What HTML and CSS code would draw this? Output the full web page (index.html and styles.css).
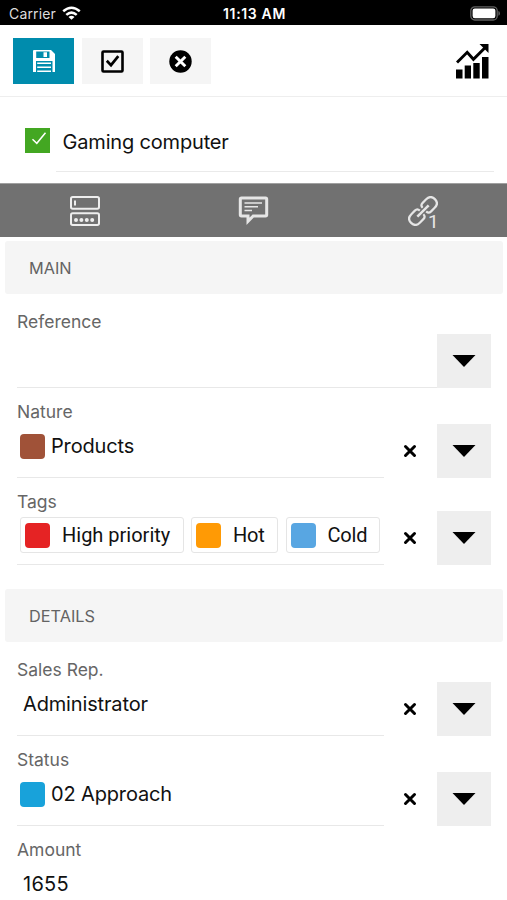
FILE: index.html
```html
<!DOCTYPE html>
<html lang="en">
<head>
<meta charset="utf-8">
<meta name="viewport" content="width=device-width, initial-scale=1">
<title>Gaming computer</title>
<link rel="stylesheet" href="styles.css">
</head>
<body>
<svg class="defs" width="0" height="0">
  <symbol id="arrow" viewBox="0 0 24 12"><path d="M0.5 0H23.5L12 12Z"/></symbol>
  <symbol id="clear" viewBox="0 0 14 14"><path d="M2.5 2.5L11.5 11.5M11.5 2.5L2.5 11.5" stroke="#000" stroke-width="3" stroke-linecap="round"/></symbol>
</svg>
<div class="status">
  <div class="carrier"><span class="carrier-name">Carrier</span>
    <svg width="19" height="15" viewBox="0 0 19 15" fill="none" stroke="#fff" stroke-width="2.5"><path d="M1.2 5.3Q9.5 -1.7 17.8 5.3M4.3 8.9Q9.5 4.3 14.7 8.9"/><path d="M9.5 13.8L6.5 10.9Q9.5 8.5 12.5 10.9Z" fill="#fff" stroke="none"/></svg>
  </div>
  <span class="clock">11:13 AM</span>
  <svg class="battery" width="31" height="15" viewBox="0 0 31 15"><rect x=".8" y=".8" width="26.4" height="13.2" rx="4" fill="none" stroke="#606060" stroke-width="1.3"/><rect x="2.6" y="2.6" width="22.8" height="9.6" rx="2.2" fill="#fff"/><path d="M28.4 5Q30 5.5 30 7.4T28.4 9.8Z" fill="#606060"/></svg>
</div>
<header class="toolbar">
  <button class="tool primary" aria-label="Save"><svg width="22" height="23" viewBox="0 0 22 23"><path fill="#fff" fill-rule="evenodd" d="M1 0H18L22 4V22H19.5V11H3V22H0V1Q0 0 1 0ZM3.2 1.4V8H16.5V1.4ZM10.5 2.2H14V7H10.5Z"/><path fill="none" stroke="#fff" stroke-width="1.4" d="M4.2 13.2H18M4.2 17.2H18M4.2 21.2H18"/></svg></button>
  <button class="tool" aria-label="Save and close"><svg width="23" height="23" viewBox="0 0 23 23" fill="none" stroke="#000"><rect x="1.5" y="1.5" width="20" height="20" rx="1" stroke-width="2.6"/><path d="M5.8 10.8L10 15.2L17.3 6.2" stroke-width="2.7"/></svg></button>
  <button class="tool" aria-label="Cancel"><svg width="23" height="23" viewBox="0 0 23 23"><circle cx="11.5" cy="11.5" r="11.2"/><path d="M6.7 6.7L16.3 16.3M16.3 6.7L6.7 16.3" stroke="#fff" stroke-width="2.9"/></svg></button>
  <svg class="chart" width="33" height="35" viewBox="0 0 33 35"><path d="M0 25.5H6.5V34.5H0ZM8.7 21.5H15V34.5H8.7ZM17.3 19H23.7V34.5H17.3ZM26 13H32.5V34.5H26Z"/><path d="M1 18.5L11.2 8.3L17.4 15.3L29 3.7" fill="none" stroke="#000" stroke-width="2.9"/><path d="M23.5 0H32.5V9Z"/></svg>
</header>
<div class="record">
  <span class="done"><svg width="25" height="25" viewBox="0 0 25 25" fill="none" stroke="#fff" stroke-width="1.5"><path d="M7.5 11.3L11.8 15.3L20.5 4.7"/></svg></span>
  <div class="record-name"><span class="name-text">Gaming computer</span></div>
</div>
<nav class="tabs">
  <a><svg width="30" height="30" viewBox="0 0 30 30" fill="none" stroke="#eee" stroke-width="2"><rect x="1" y="1" width="28" height="11.8" rx="1.7"/><path d="M5 4.5V9.5"/><rect x="1" y="17.2" width="28" height="11.8" rx="1.7"/><path d="M6 23.9H25" stroke-width="4" stroke-linecap="round" stroke-dasharray="0 5.4"/></svg></a>
  <a><svg width="31" height="29" viewBox="0 0 31 29" fill="none" stroke="#e6e6e6"><path d="M3.5 2H27.5Q28.7 2 28.7 3.2V18.8Q28.7 20 27.5 20H15.2L10 25.3V20H3.5Q2.3 20 2.3 18.8V3.2Q2.3 2 3.5 2Z" stroke-width="3"/><path d="M6.5 7H24M6.5 10.8H20M6.5 14.6H14" stroke-width="1.5"/></svg></a>
  <a><svg class="link" width="30" height="30" viewBox="0 0 30 30" fill="none" stroke="#e6e6e6" stroke-width="2.2"><g transform="translate(15 15) rotate(-45)"><path d="M2 -2.5Q2 -6 5.5 -6H10.5Q16.8 -6 16.8 0T10.5 6H5.5Q2 6 2 2.5"/><path d="M-2 2.5Q-2 6 -5.5 6H-10.5Q-16.8 6 -16.8 0T-10.5 -6H-5.5Q-2 -6 -2 -2.5"/><path d="M-8 0H8" stroke-width="2.5"/></g></svg><span class="count">1</span></a>
</nav>
<main>
  <h2>MAIN</h2>
  <section class="field">
    <label>Reference</label>
    <div class="control"><div class="value wide"></div><button class="drop"><svg width="24" height="12"><use href="#arrow"/></svg></button></div>
  </section>
  <section class="field">
    <label>Nature</label>
    <div class="control"><div class="value"><i class="swatch brown"></i><span>Products</span></div><button class="clear"><svg width="14" height="14"><use href="#clear"/></svg></button><button class="drop"><svg width="24" height="12"><use href="#arrow"/></svg></button></div>
  </section>
  <section class="field compact">
    <label>Tags</label>
    <div class="control"><div class="value tags"><span class="tag high"><i class="swatch red"></i>High priority</span><span class="tag hot"><i class="swatch orange"></i>Hot</span><span class="tag cold"><i class="swatch sky"></i>Cold</span></div><button class="clear"><svg width="14" height="14"><use href="#clear"/></svg></button><button class="drop"><svg width="24" height="12"><use href="#arrow"/></svg></button></div>
  </section>
  <h2 class="details">DETAILS</h2>
  <section class="field">
    <label>Sales Rep.</label>
    <div class="control"><div class="value plain"><span>Administrator</span></div><button class="clear"><svg width="14" height="14"><use href="#clear"/></svg></button><button class="drop"><svg width="24" height="12"><use href="#arrow"/></svg></button></div>
  </section>
  <section class="field">
    <label>Status</label>
    <div class="control"><div class="value"><i class="swatch blue"></i><span>02 Approach</span></div><button class="clear"><svg width="14" height="14"><use href="#clear"/></svg></button><button class="drop"><svg width="24" height="12"><use href="#arrow"/></svg></button></div>
  </section>
  <section class="field">
    <label>Amount</label>
    <div class="control"><div class="value plain number"><span>1655</span></div></div>
  </section>
</main>
</body>
</html>
```

FILE: styles.css
```css
* { box-sizing: border-box; }
body { margin: 0; height: 900px; overflow: hidden; background: #fff; color: #111; font-family: Inter, sans-serif; font-size: 20px; }
svg { display: block; flex: none; }
.defs { position: absolute; }
button { border: 0; padding: 0; display: flex; align-items: center; justify-content: center; flex: none; }
.status { height: 25px; background: #000; color: #fff; display: grid; grid-template-columns: 1fr auto 1fr; align-items: center; padding: 2px 6px 0 9px; font-size: 14px; }
.carrier { display: flex; align-items: center; gap: 6px; color: #ddd; }
.carrier-name { letter-spacing: .15px; }
.clock { font-weight: 600; font-size: 14px; letter-spacing: .65px; margin-left: -1px; }
.battery { justify-self: end; }
.toolbar { height: 72px; display: flex; gap: 7.5px; padding: 13px 18px 0 13px; border-bottom: 1px solid #eee; }
.tool { width: 61px; height: 46px; background: #f5f5f5; }
.primary { background: #008cad; }
.chart { margin: 6px 0 0 auto; }
.record { height: 86px; display: flex; padding: 31px 13px 0 25px; }
.done { width: 25px; height: 25px; background: #43a722; }
.record-name { flex: 1; height: 44px; margin-left: 6px; padding-left: 6.5px; border-bottom: 1.5px solid #eaeaea; line-height: 29px; letter-spacing: -.17px; }
.tabs { height: 54px; display: grid; grid-template-columns: repeat(3, 1fr); background: #717171; border-top: 1px solid #a0a0a0; }
.tabs a { display: flex; align-items: center; justify-content: center; position: relative; }
.link { margin-bottom: 0; }
.count { position: absolute; left: 90px; top: 26px; color: #e6e6e6; font: 19px/24px Roboto, sans-serif; }
main { padding-top: 4px; }
h2 { margin: 0 4px 4px 5px; height: 53px; line-height: 54px; padding-left: 24px; background: #f5f5f5; border-radius: 3px; color: #636363; font-size: 16.3px; font-weight: 400; }
.details { margin-top: 24px; }
.field { padding: 0 16px 0 17px; }
label { display: block; height: 36px; padding-top: 12px; line-height: 24px; color: #666; font-size: 17.5px; }
.compact label { height: 33px; }
.control { display: flex; height: 54px; }
.value { width: 367px; height: 54px; border-bottom: 1.5px solid #e8e8e8; display: flex; line-height: 45px; padding-left: 3px; letter-spacing: -.15px; }
.wide { width: 420px; }
.plain { padding-left: 6px; }
.number { letter-spacing: .25px; border: 0; }
.swatch { width: 25px; height: 25px; border-radius: 4px; margin: 10px 6px 0 0; flex: none; }
.brown { background: #a05238; }
.red { background: #e52324; }
.orange { background: #ff9a05; }
.sky { background: #58a6e2; }
.blue { background: #18a2da; }
.clear { width: 53px; height: 54px; padding-right: 1px; background: none; }
.drop { width: 54px; height: 54px; background: #eee; }
.tags { gap: 7.5px; padding-top: 6px; letter-spacing: 0; }
.tag { height: 36px; border: 1.5px solid #e5e5e5; border-radius: 3px; display: flex; align-items: center; padding-left: 4px; font: 20px/34px Roboto, sans-serif; }
.tag .swatch { margin: 0 12px 0 0; }
.high { width: 163.5px; }
.hot { width: 87px; letter-spacing: -.15px; }
.cold { width: 94.5px; letter-spacing: -.2px; }
```
